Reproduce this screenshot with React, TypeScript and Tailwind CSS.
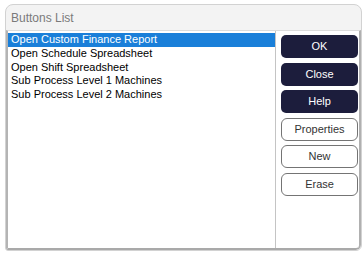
import React from 'react';

const items = [
  'Open Custom Finance Report',
  'Open Schedule Spreadsheet',
  'Open Shift Spreadsheet',
  'Sub Process Level 1 Machines',
  'Sub Process Level 2 Machines',
];

const darkButtons = ['OK', 'Close', 'Help'];
const lightButtons = ['Properties', 'New', 'Erase'];

function App() {
  return (
    <div
      className="w-[364px] h-[253px] bg-white pt-[4px] pl-[5px] pr-[2px] pb-[2px] overflow-hidden"
      style={{ fontFamily: '"Liberation Sans", Arial, sans-serif' }}
    >
      <div className="h-full flex flex-col rounded-t-[8px] rounded-br-[6px] rounded-bl-[3px] border border-[#d2d2d2] bg-[#f3f3f3] overflow-hidden">
        {/* Title */}
        <div className="h-[25px] flex items-center pl-[5px] text-[12px] text-[#7a7a7a]">
          Buttons List
        </div>

        {/* Content */}
        <div className="flex-1 flex bg-white border-t border-t-[#dcdcdc] border-l-2 border-l-[#b4b4b4] border-b-2 border-b-[#a9a9a9] border-r-2 border-r-[#b0b0b0] rounded-br-[5px]">
          {/* List */}
          <div className="w-[268px] pt-[2px] border-r border-r-[#c4c4c4] text-[11px] text-black">
            {items.map((item, i) => (
              <div
                key={item}
                className={
                  i === 0
                    ? 'h-[13.75px] leading-[13.75px] pl-[3px] bg-[#1a7fd9] text-white'
                    : 'h-[13.75px] leading-[13.75px] pl-[3px]'
                }
              >
                {item}
              </div>
            ))}
          </div>

          {/* Buttons */}
          <div className="flex-1 flex flex-col gap-[4.5px] pt-[4px] pl-[5px] pr-[1px] text-[11px]">
            {darkButtons.map((b) => (
              <button
                key={b}
                className="h-[23px] w-[77px] rounded-[5px] bg-[#1c1d3c] text-white"
              >
                {b}
              </button>
            ))}
            {lightButtons.map((b) => (
              <button
                key={b}
                className="h-[23px] w-[77px] rounded-[6px] border-[1.5px] border-[#747474] bg-white text-[#333]"
              >
                {b}
              </button>
            ))}
          </div>
        </div>
      </div>
    </div>
  );
}

export default App;
